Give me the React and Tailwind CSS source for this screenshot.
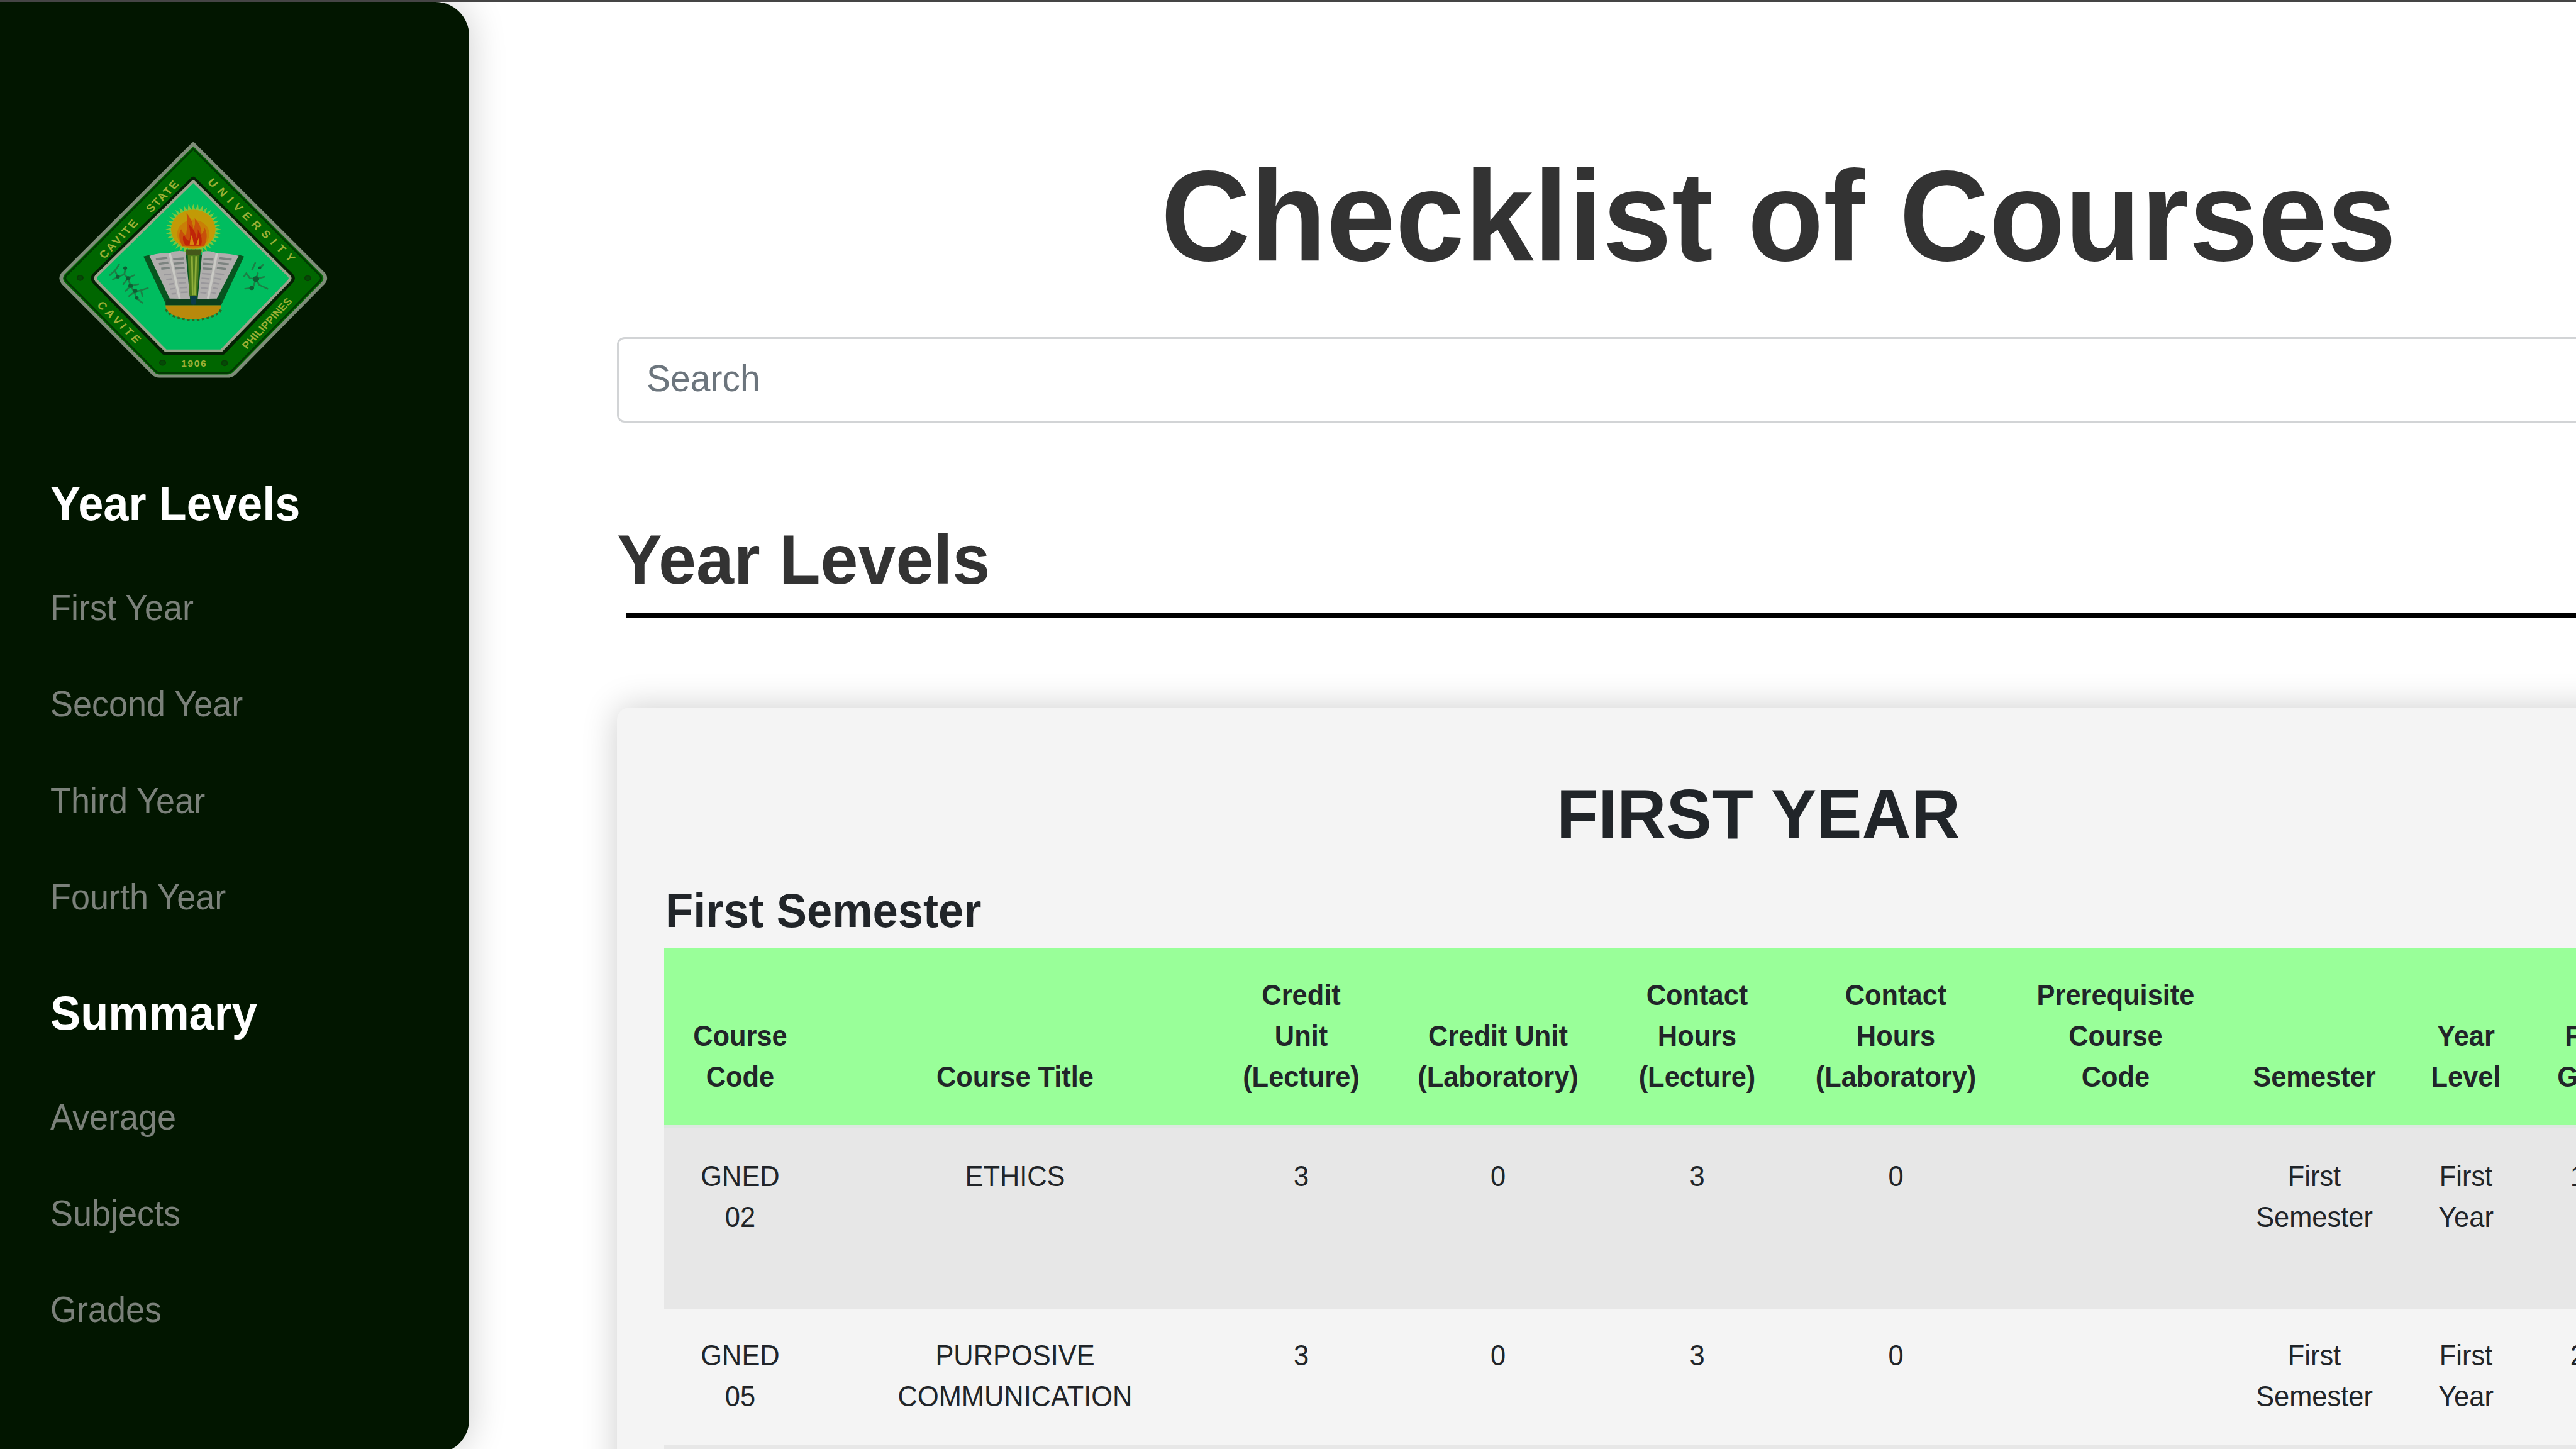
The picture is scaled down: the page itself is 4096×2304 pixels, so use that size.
function SealText({ x, y, angle, length, size = 62, children }) {
  return (
    <text
      transform={`translate(${x} ${y}) rotate(${angle})`}
      textLength={length}
      fontSize={size}
      fontWeight="700"
      fill="#9caf36"
      fontFamily="Liberation Sans, sans-serif"
    >
      {children}
    </text>
  );
}

function Seal() {
  const rays = Array.from({ length: 36 }, (_, i) => {
    const a = (i * Math.PI) / 18;
    const b = a + Math.PI / 36;
    return `${785 + 145 * Math.cos(a)},${592 + 150 * Math.sin(a)} ${785 + 112 * Math.cos(b)},${592 + 115 * Math.sin(b)}`;
  }).join(" ");
  return (
    <svg viewBox="0 0 1568 1568" preserveAspectRatio="none" className="h-[423px] w-[478px]">
      <path
        d="M785 88 L1463 852 Q1484 880 1463 908 L1000 1440 Q985 1457 960 1457 L608 1457 Q590 1457 575 1440 L106 908 Q86 880 106 852 Z"
        fill="#006600"
        stroke="#7e8d78"
        strokeWidth="19"
        strokeLinejoin="round"
      />
      <path
        d="M785 118 L1445 862 Q1458 880 1445 897 L985 1427 Q976 1437 960 1437 L608 1437 Q596 1437 588 1427 L124 897 Q110 880 124 862 Z"
        fill="none"
        stroke="#013a02"
        strokeWidth="10"
      />
      <path
        d="M785 292 L1296 862 Q1312 880 1296 900 L940 1320 L632 1320 L268 900 Q256 880 268 862 Z"
        fill="none"
        stroke="#052004"
        strokeWidth="22"
        strokeLinejoin="round"
      />
      <path
        d="M785 308 L1284 866 Q1296 880 1284 895 L930 1308 L642 1308 L280 895 Q270 880 280 866 Z"
        fill="#00bd5f"
        stroke="#9aa58b"
        strokeWidth="15"
        strokeLinejoin="round"
      />

      <SealText x={322} y={768} angle={-50} length={275}>CAVITE</SealText>
      <SealText x={566} y={496} angle={-49} length={222}>STATE</SealText>
      <SealText x={856} y={316} angle={47.5} length={640}>UNIVERSITY</SealText>
      <SealText x={280} y={1040} angle={48} length={305}>CAVITE</SealText>
      <SealText x={1066} y={1300} angle={-50} length={370} size={58}>PHILIPPINES</SealText>
      <SealText x={722} y={1402} angle={0} length={130} size={52}>1906</SealText>
      {[
        [195, 878],
        [1382, 880],
        [625, 1378],
        [948, 1380],
      ].map(([cx, cy]) => (
        <circle key={cx} cx={cx} cy={cy} r="15" fill="#044a06" stroke="#0a3c06" strokeWidth="6" />
      ))}

      <g fill="none" stroke="#1c7f45" strokeWidth="9" strokeLinecap="round">
        <path d="M398 800 L376 835 L392 872 M376 835 L350 862 M392 872 L366 888 M392 872 L425 858 L445 880 M425 858 L432 820 M445 880 L420 915 M445 880 L478 862 M445 880 L458 925 L432 955 M458 925 L498 915 M458 925 L478 962 L450 985 M478 962 L512 950 L548 938 M512 950 L520 985 M478 962 L490 1000 L520 1025" />
        <path d="M1108 790 L1092 830 M1132 820 L1150 800 M1062 850 L1080 880 L1112 885 L1122 850 M1062 850 L1050 870 M1112 885 L1155 872 M1112 885 L1098 930 M1112 885 L1130 920 L1172 942 M1055 942 L1098 936" />
      </g>
      <g fill="#0f5f34">
        <circle cx="430" cy="820" r="10" />
        <circle cx="392" cy="872" r="10" />
        <circle cx="445" cy="880" r="12" />
        <circle cx="458" cy="925" r="12" />
        <circle cx="482" cy="955" r="12" />
        <circle cx="490" cy="996" r="10" />
        <circle cx="1112" cy="885" r="17" />
        <circle cx="1132" cy="818" r="8" />
        <circle cx="1090" cy="938" r="12" />
      </g>

      <polygon points={rays} fill="#7fc53c" />
      <circle cx="785" cy="592" r="116" fill="#c29a06" />
      <circle cx="785" cy="620" r="84" fill="#c97f06" />
      <path
        d="M728 690 Q700 630 722 590 Q735 625 748 625 Q756 560 750 495 Q785 545 785 590 Q800 560 792 525 Q830 570 828 620 Q845 600 842 578 Q868 630 842 690 Z"
        fill="#c8500a"
      />
      <path
        d="M745 688 Q722 650 736 625 Q752 660 765 660 Q775 610 760 560 Q800 600 800 645 Q812 620 808 590 Q838 640 826 688 Z"
        fill="#bf2408"
      />
      <path d="M766 686 Q768 650 778 622 Q782 650 790 686 Z" fill="#d98a10" />
      <path d="M800 686 Q806 660 814 640 Q816 665 814 686 Z" fill="#d98a10" />

      <path d="M525 752 L560 742 L1025 742 L1050 752 L930 1040 L645 1040 Z" fill="#07551f" />
      <path d="M556 748 Q610 728 660 732 Q700 712 745 724 L768 1002 L662 1000 Z" fill="#b0aead" />
      <path d="M1022 748 Q970 732 912 734 Q870 712 832 724 L808 1002 L908 1000 Z" fill="#b0aead" />
      <path d="M662 732 L714 1000 M908 734 L862 1000" stroke="#c9c9c4" strokeWidth="12" />
      <g stroke="#7c8380" strokeWidth="13">
        <path d="M590 768 L650 760 M606 796 L655 788 M618 824 L662 818 M680 768 L735 764 M684 794 L738 790 M690 822 L740 818" />
        <path d="M838 766 L890 770 M836 794 L886 798 M834 822 L882 826 M922 762 L985 770 M914 790 L970 798 M908 818 L955 826" />
      </g>
      <g stroke="#9a989c" strokeWidth="9">
        <path d="M632 860 L670 856 M644 888 L676 884 M656 916 L684 912 M664 944 L690 940 M672 972 L696 970 M698 852 L744 850 M702 880 L746 878 M708 908 L748 906 M714 936 L752 934 M720 964 L756 962" />
        <path d="M830 852 L876 856 M828 880 L870 884 M826 908 L866 912 M824 936 L860 940 M822 964 L854 968 M900 852 L946 858 M896 880 L932 886 M890 908 L922 914 M886 936 L912 942 M880 964 L902 970" />
      </g>
      <path d="M645 1004 L770 1004 L785 1040 L800 1004 L925 1004 L932 1040 L640 1040 Z" fill="#0b3f1c" />
      <path d="M745 712 L828 712 L824 745 L818 745 L806 985 L766 985 L756 745 L750 745 Z" fill="#4f7a1c" />
      <path d="M745 710 L828 710 L826 745 L748 745 Z" fill="#44581a" />
      <path d="M778 750 L782 980 M800 750 L794 980" stroke="#8fae3a" strokeWidth="9" />
      <path d="M768 985 L804 985 L796 1036 L776 1036 Z" fill="#0b3b4a" />
      <path d="M640 1040 L930 1040 Q930 1080 880 1104 Q830 1124 785 1124 Q740 1124 690 1104 Q642 1080 640 1040 Z" fill="#b8890c" />
      <path
        d="M642 1064 Q660 1098 690 1106 Q740 1128 785 1128 Q830 1128 880 1106 Q920 1090 930 1064"
        fill="none"
        stroke="#2c6a24"
        strokeWidth="12"
        strokeDasharray="14 12"
      />
    </svg>
  );
}

function NavGroup({ title, items, className }) {
  return (
    <section className={className}>
      <h2 className="origin-[0%_79%] scale-y-[1.06] text-[72.2px] leading-[86px] font-bold text-white">{title}</h2>
      <ul className="mt-[82px]">
        {items.map((item) => (
          <li key={item} className="h-[153.4px] text-[54px] leading-[81px] text-[#7b817a]">
            <div className="origin-[0%_73%] scale-y-[1.05]">{item}</div>
          </li>
        ))}
      </ul>
    </section>
  );
}

const columns = [
  { width: "w-[242px]", label: ["Course", "Code"] },
  { width: "w-[632px]", label: ["Course Title"] },
  { width: "w-[278px]", label: ["Credit", "Unit", "(Lecture)"] },
  { width: "w-[348px]", label: ["Credit Unit", "(Laboratory)"] },
  { width: "w-[285px]", label: ["Contact", "Hours", "(Lecture)"] },
  { width: "w-[347px]", label: ["Contact", "Hours", "(Laboratory)"] },
  { width: "w-[352px]", label: ["Prerequisite", "Course", "Code"] },
  { width: "w-[280px]", label: ["Semester"] },
  { width: "w-[202px]", label: ["Year", "Level"] },
  { width: "w-[214px]", label: ["Final", "Grade"] },
];

const rows = [
  [["GNED", "02"], ["ETHICS"], ["3"], ["0"], ["3"], ["0"], [], ["First", "Semester"], ["First", "Year"], ["1.75"]],
  [["GNED", "05"], ["PURPOSIVE", "COMMUNICATION"], ["3"], ["0"], ["3"], ["0"], [], ["First", "Semester"], ["First", "Year"], ["2.00"]],
];

function Lines({ lines }) {
  return lines.map((line) => (
    <div key={line} className="origin-[50%_73%] scale-y-[1.05] whitespace-nowrap">
      {line}
    </div>
  ));
}

export default function App() {
  return (
    <div className="h-[2304px] w-[4096px] overflow-hidden border-t-[3px] border-[#454545] bg-white font-['Liberation_Sans',Arial,sans-serif]">
      <div className="flex h-[2308px]">
        <aside className="h-[2308px] w-[746px] shrink-0 rounded-r-[54px] bg-[#021600] shadow-[0_0_60px_rgba(0,0,0,0.2)]">
          <div className="pt-[202px] pl-[68px]">
            <Seal />
          </div>
          <NavGroup
            title="Year Levels"
            items={["First Year", "Second Year", "Third Year", "Fourth Year"]}
            className="mt-[131px] pl-[80px]"
          />
          <NavGroup title="Summary" items={["Average", "Subjects", "Grades"]} className="mt-[28px] pl-[80px]" />
        </aside>

        <main className="w-[3350px] shrink-0 overflow-hidden pl-[235px]">
          <h1 className="mt-[225px] w-[3694px] origin-[50%_79%] scale-y-[1.03] text-center text-[197.5px] leading-[236px] font-bold text-[#333333]">
            Checklist of Courses
          </h1>
          <div className="mt-[72px] flex h-[136px] w-[3694px] items-center rounded-[12px] border-3 border-[#d2d4d6] bg-white pl-[44px] text-[57px] text-[#6c757d]">
            <span className="-mt-[3px] origin-[0%_79%] scale-y-[1.04]">Search</span>
          </div>
          <h2 className="mt-[154px] origin-[0%_79%] scale-y-[1.03] text-[107.8px] leading-[130px] font-bold text-[#333333]">
            Year Levels
          </h2>
          <div className="mt-[18px] ml-[14px] h-[8px] bg-black" />

          <section className="mt-[143px] h-[1400px] w-[3630px] rounded-tl-[20px] bg-[#f4f4f4] pt-[106px] pl-[75px] text-[#212529] shadow-[0_0_56px_rgba(0,0,0,0.2)]">
            <h3 className="-ml-[75px] origin-[50%_79%] scale-y-[1.03] text-center text-[108.3px] leading-[130px] font-bold">
              FIRST YEAR
            </h3>
            <h4 className="mt-[45px] ml-[2px] origin-[0%_79%] scale-y-[1.04] text-[72.3px] leading-[87px] font-bold">
              First Semester
            </h4>
            <table className="mt-[14px] w-[3180px] table-fixed border-collapse text-center text-[43.4px] leading-[65px]">
              <thead>
                <tr className="h-[282px] bg-[#99ff99] align-bottom">
                  {columns.map((c, i) => (
                    <th key={i} className={`${c.width} pb-[43px] font-bold`}>
                      <Lines lines={c.label} />
                    </th>
                  ))}
                </tr>
              </thead>
              <tbody className="align-top">
                {rows.map((cells, r) => (
                  <tr
                    key={r}
                    className={r === 0 ? "h-[292px] bg-[#e7e7e7] shadow-[inset_0_4px_0_#dde8df]" : "h-[217px]"}
                  >
                    {cells.map((lines, i) => (
                      <td key={i} className={r === 0 ? "pt-[50px]" : "pt-[43px]"}>
                        <Lines lines={lines} />
                      </td>
                    ))}
                  </tr>
                ))}
                <tr className="h-[217px] bg-[#e7e7e7]">
                  <td colSpan={10} />
                </tr>
              </tbody>
            </table>
          </section>
        </main>
      </div>
    </div>
  );
}
